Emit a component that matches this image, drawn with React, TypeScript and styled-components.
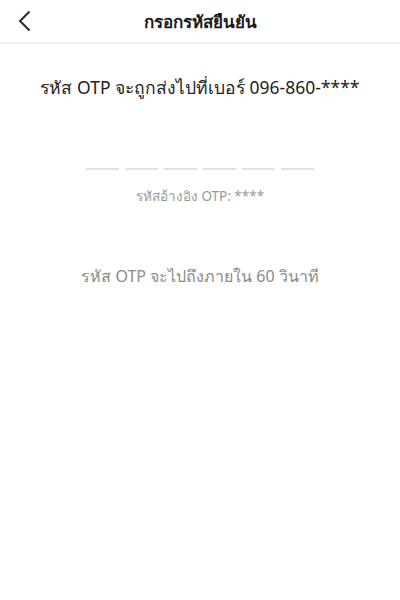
import { FC } from 'react';
import styled, { createGlobalStyle } from 'styled-components';

const GlobalStyle = createGlobalStyle`
  html, body {
    margin: 0;
    padding: 0;
    background: #fff;
  }
  body {
    font-family: "Noto Sans", "DejaVu Sans", sans-serif;
  }
`;

const Page = styled.div`
  width: 400px;
  min-height: 600px;
  background: #fff;
  display: flex;
  flex-direction: column;
`;

const Header = styled.header`
  height: 42px;
  border-bottom: 2px solid #eeeeee;
  display: grid;
  grid-template-columns: 48px 1fr 48px;
  align-items: center;
`;

const BackButton = styled.button`
  border: 0;
  background: none;
  padding: 0 0 0 18px;
  height: 42px;
  display: flex;
  align-items: center;
  cursor: pointer;
`;

const Title = styled.h1`
  margin: 0;
  text-align: center;
  font-size: 17px;
  font-weight: 700;
  color: #1a1a1a;
`;

const Content = styled.main`
  display: flex;
  flex-direction: column;
  align-items: center;
`;

const SentTo = styled.p`
  margin: 30px 0 0;
  font-size: 17.5px;
  color: #222;
`;

const CodeRow = styled.div`
  margin-top: 66px;
  display: flex;
  gap: 6px;
`;

const Dash = styled.span`
  width: 33px;
  height: 2px;
  background: #e2e2e2;
`;

const RefCode = styled.p`
  margin: 15px 0 0;
  font-size: 13.5px;
  color: #9a9a9a;
`;

const Countdown = styled.p`
  margin: 57px 0 0;
  font-size: 16px;
  color: #8a8a8a;
`;

const App: FC = () => {
  return (
    <Page>
      <GlobalStyle />
      <Header>
        <BackButton aria-label="back">
          <svg width="13" height="22" viewBox="0 0 13 22" fill="none">
            <path d="M11.5 1.5L2 11l9.5 9.5" stroke="#2b2b2b" strokeWidth="2" />
          </svg>
        </BackButton>
        <Title>กรอกรหัสยืนยัน</Title>
        <span />
      </Header>
      <Content>
        <SentTo>รหัส OTP จะถูกส่งไปที่เบอร์ 096-860-****</SentTo>
        <CodeRow>
          {[0, 1, 2, 3, 4, 5].map((i) => (
            <Dash key={i} />
          ))}
        </CodeRow>
        <RefCode>รหัสอ้างอิง OTP: ****</RefCode>
        <Countdown>รหัส OTP จะไปถึงภายใน 60 วินาที</Countdown>
      </Content>
    </Page>
  );
};

export default App;
